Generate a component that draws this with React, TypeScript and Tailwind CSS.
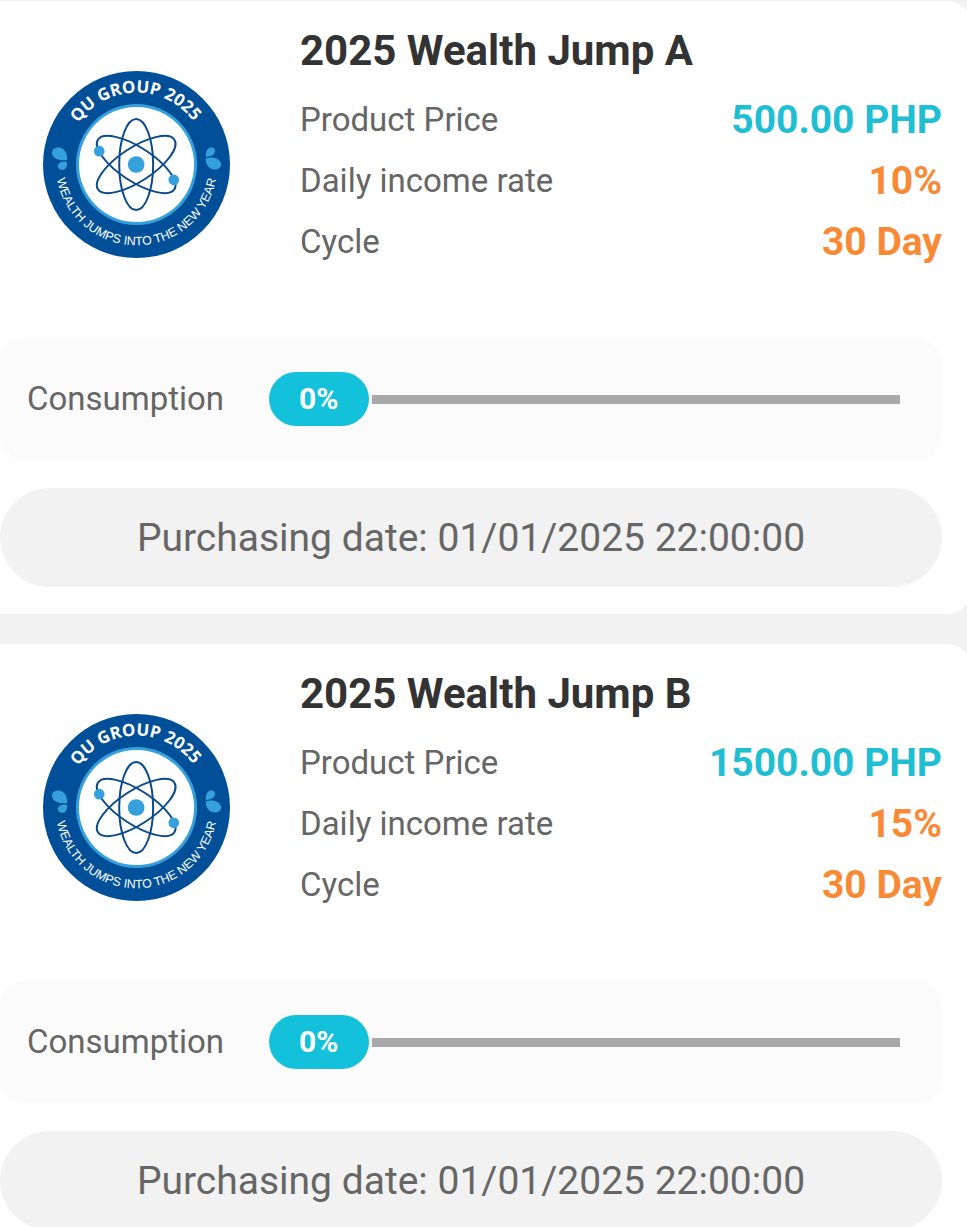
import { useId } from 'react';

interface Product {
  name: string;
  price: string;
  rate: string;
  cycle: string;
  consumption: number;
  purchasedAt: string;
}

const products: Product[] = [
  {
    name: '2025 Wealth Jump A',
    price: '500.00 PHP',
    rate: '10%',
    cycle: '30 Day',
    consumption: 0,
    purchasedAt: '01/01/2025 22:00:00',
  },
  {
    name: '2025 Wealth Jump B',
    price: '1500.00 PHP',
    rate: '15%',
    cycle: '30 Day',
    consumption: 0,
    purchasedAt: '01/01/2025 22:00:00',
  },
];

function GroupLogo() {
  const id = useId();

  return (
    <svg viewBox="-281 -281 562 562" className="w-full" role="img" aria-label="QU Group 2025">
      <defs>
        <path id={`${id}-top`} d="M-212 -4A212 212 0 0 1 212 -4" />
        <path id={`${id}-bottom`} d="M-243 0A243 243 0 0 0 243 0" />
      </defs>
      <circle r="281" fill="#004f98" />
      <circle r="182" fill="#36a0dc" />
      <circle r="173" fill="#fff" />

      {/* Atom */}
      <g fill="none" stroke="#0a4a8a" strokeWidth="6">
        <ellipse cx="-1" cy="0" rx="51" ry="137" />
        <ellipse cx="-1" cy="0" rx="51" ry="137" transform="rotate(57 -1 0)" />
        <ellipse cx="-1" cy="0" rx="51" ry="137" transform="rotate(-57 -1 0)" />
      </g>
      <g fill="#36a0dc">
        <circle cx="-1" cy="0" r="25" />
        <circle cx="-112" cy="-40" r="16" />
        <circle cx="112" cy="46" r="16" />
      </g>

      {/* Drops */}
      <g fill="#36a0dc">
        <path d="M-208 -14C-230 -10 -252 -18 -254 -34C-255 -46 -244 -53 -232 -51C-215 -48 -208 -32 -208 -14Z" />
        <path d="M-210 -9C-207 4 -211 16 -223 16C-234 16 -239 6 -235 -1C-231 -8 -221 -9 -210 -9Z" />
        <path d="M208 -23C207 -37 212 -51 225 -52C234 -52 238 -43 235 -36C231 -27 220 -23 208 -23Z" />
        <path d="M208 -18C229 -26 250 -18 254 -3C256 8 246 16 234 15C216 12 207 0 208 -18Z" />
      </g>

      <text
        fill="#fff"
        fontSize="51"
        fontWeight="700"
        textAnchor="middle"
        className="font-['Open_Sans','Noto_Sans',sans-serif]"
      >
        <textPath href={`#${id}-top`} startOffset="49.5%">QU GROUP 2025</textPath>
      </text>
      <text
        fill="#fff"
        fontSize="37"
        textAnchor="middle"
        className="font-['Liberation_Sans',Arial,sans-serif]"
      >
        <textPath href={`#${id}-bottom`} startOffset="50%">WEALTH JUMPS INTO THE NEW YEAR</textPath>
      </text>
    </svg>
  );
}

function ProductCard({ product }: { product: Product }) {
  return (
    <article className="-mr-1 rounded-r-3xl bg-white pr-[29px] pb-[27px] pt-6">
      <div className="flex">
        <div className="ml-[43px] mt-[46px] w-[187px] shrink-0">
          <GroupLogo />
        </div>
        <div className="ml-[70px] flex-1">
          <h2 className="text-[42px] font-bold leading-[52px] text-[#333]">{product.name}</h2>
          <dl className="mt-3 text-[33px] leading-[61px] text-[#666]">
            <div className="flex h-[61px] justify-between">
              <dt>Product Price</dt>
              <dd className="text-[39px] font-bold leading-[63px] text-[#1fbed3]">{product.price}</dd>
            </div>
            <div className="flex h-[61px] justify-between">
              <dt>Daily income rate</dt>
              <dd className="text-[39px] font-bold leading-[63px] text-[#f98a35]">{product.rate}</dd>
            </div>
            <div className="flex h-[61px] justify-between">
              <dt>Cycle</dt>
              <dd className="text-[39px] font-bold leading-[63px] text-[#f98a35]">{product.cycle}</dd>
            </div>
          </dl>
        </div>
      </div>

      {/* Consumption */}
      <div className="mt-[66px] flex items-center rounded-3xl bg-[#fbfbfb] py-[34px] pl-[27px] pr-[42px]">
        <span className="text-[33px] leading-[54px] text-[#666]">Consumption</span>
        <div className="ml-[45px] flex flex-1 items-center gap-[3px]">
          <span className="rounded-full bg-[#13c2da] px-[30px] text-[30px] font-bold leading-[54px] text-white">
            {product.consumption}%
          </span>
          <div className="h-[9px] flex-1 bg-[#a9a9a9]">
            <div className="h-full bg-[#13c2da]" style={{ width: `${product.consumption}%` }} />
          </div>
        </div>
      </div>

      <p className="mt-7 rounded-full bg-[#f2f2f2] pt-0.5 text-center text-[39px] leading-[97px] text-[#666]">
        Purchasing date: {product.purchasedAt}
      </p>
    </article>
  );
}

export default function App() {
  return (
    <main className="flex min-h-screen flex-col gap-[30px] overflow-x-hidden bg-[#f2f2f2] pt-px font-[Roboto,sans-serif]">
      {products.map((product) => (
        <ProductCard key={product.name} product={product} />
      ))}
    </main>
  );
}
